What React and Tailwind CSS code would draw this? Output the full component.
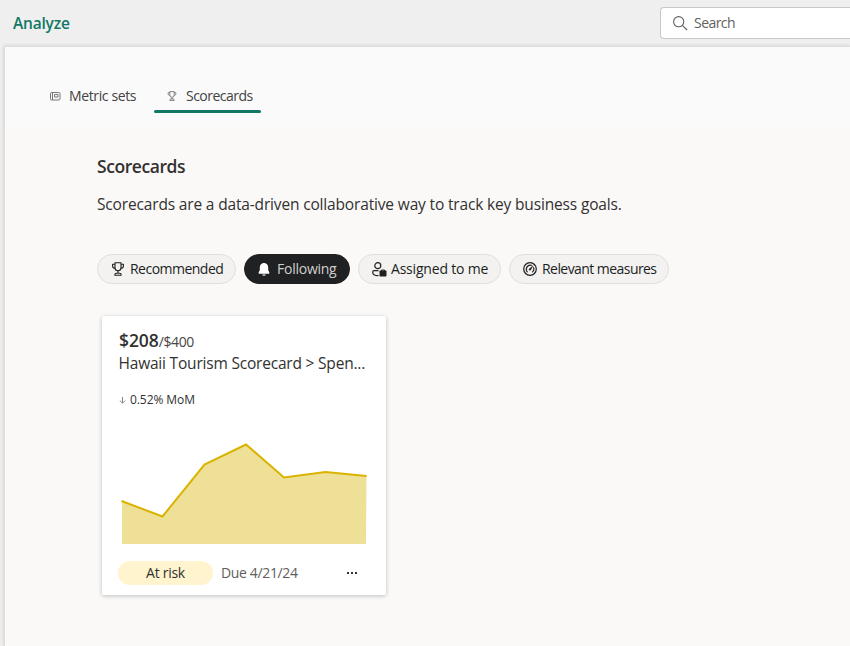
import React from 'react';

function Trophy({ className }) {
  return (
    <svg className={className} viewBox="0 0 14 14" fill="none" stroke="currentColor" strokeWidth="1.1" strokeLinejoin="round">
      <path d="M4 .8h6v5a3 3 0 0 1-6 0z" />
      <path d="M4 2.300H1.600v1.600c0 1.300.9 2.300 2.500 2.400M10 2.300h2.400v1.600c0 1.300-.9 2.300-2.500 2.400M7 8.900v2.300M3.900 13.200v-.6c0-.8.5-1.400 1.300-1.400h3.600c.8 0 1.300.6 1.300 1.400v.6z" />
    </svg>
  );
}

function MetricSet() {
  return (
    <svg className="w-[11px] h-[9px] text-[#777]" viewBox="0 0 11 9" fill="none" stroke="currentColor">
      <rect x="0.5" y="0.5" width="9.500" height="7.500" rx="1.200" />
      <path d="M2.500 1v7M4.500 2.500h3.500v2.500h-3.500z" />
    </svg>
  );
}

function Bell() {
  return (
    <svg className="w-3 h-[13px]" viewBox="0 0 12 13" fill="currentColor">
      <path d="M6 0a4.200 4.200 0 0 0-4.200 4.200v2.900L.6 9.700c-.2.500.1 1 .6 1h9.600c.5 0 .8-.5.6-1l-1.200-2.600V4.200A4.200 4.200 0 0 0 6 0zM4.200 11.400h3.600a1.900 1.900 0 0 1-3.600 0z" />
    </svg>
  );
}

function Assigned() {
  return (
    <svg className="w-[15px] h-[15px]" viewBox="0 0 15 15" fill="none" stroke="currentColor" strokeWidth="1.200">
      <circle cx="5.800" cy="3.700" r="3" />
      <path d="M6.500 8.600H2A1.300 1.300 0 0 0 .7 9.900c0 2.300 2 3.800 5.800 3.800" />
      <rect x="7.500" y="8.500" width="7" height="6" rx="0.800" fill="currentColor" stroke="none" />
      <path d="M9.500 9V8h3v1" strokeWidth="1" />
    </svg>
  );
}

function Gauge() {
  return (
    <svg className="w-[14px] h-[14px]" viewBox="0 0 14 14" fill="none" stroke="currentColor" strokeWidth="1.200" strokeLinecap="round">
      <circle cx="7" cy="7" r="6.300" />
      <path d="M4.300 9.800a4 4 0 0 1 4-6.500M10.700 5.600A4 4 0 0 1 9.700 9.800" />
      <path d="M9.900 3.900 7.600 7.900a.8.8 0 1 1-1.400-.8z" fill="currentColor" strokeWidth=".5" />
    </svg>
  );
}

function Pill({ className, icon, children }) {
  return (
    <button className={`flex h-[30px] shrink-0 items-center rounded-full border pl-[13px] text-[14px] whitespace-nowrap ${className}`}>
      {icon}
      <span className="pb-[2px]">{children}</span>
    </button>
  );
}

const LINE = '0,58 41,73.500 83,21.500 124.500,1.500 162.500,34.500 204,29 245,33';

export default function App() {
  return (
    <div className="flex h-[646px] w-[850px] flex-col overflow-hidden bg-[#efefef] font-['Open_Sans','Noto_Sans',sans-serif] text-[#323130]">
      <header className="flex h-[46px] shrink-0 items-center justify-between pl-[13px]">
        <h1 className="text-[15.500px] leading-5 font-semibold tracking-[-0.200px] text-[#117865]">Analyze</h1>
        <div className="flex h-8 w-[190px] items-center rounded-l border border-r-0 border-[#c8c8c8] bg-white pl-3 text-[#616161]">
          <svg className="h-[15px] w-[15px]" viewBox="0 0 15 15" fill="none" stroke="currentColor" strokeWidth="1.100">
            <circle cx="5.700" cy="5.700" r="5.100" />
            <path d="m9.400 9.400 4.600 4.600" />
          </svg>
          <span className="ml-[6px] pb-[2px] text-[14px] tracking-[-0.550px]">Search</span>
        </div>
      </header>

      <main className="ml-1 flex min-h-0 flex-1 flex-col border-t border-l border-[#dedede] bg-[#faf9f8] shadow-[0_0_4px_rgba(0,0,0,0.16)]">
        <nav className="flex h-[81px] shrink-0 items-start bg-[#fafafa] pt-[34px] pl-[45px] text-[14px] leading-8 text-[#424242]">
          <div className="flex h-[30px] items-center">
            <MetricSet />
            <span className="ml-2 w-[67px] tracking-[-0.380px] whitespace-nowrap">Metric sets</span>
          </div>
          <div className="ml-[18px] flex h-8 w-[107px] flex-col">
            <div className="flex h-[29px] items-center pl-[13px]">
              <Trophy className="h-[10px] w-[10px] text-[#666]" />
              <span className="ml-[9px] pt-px tracking-[-0.520px]">Scorecards</span>
            </div>
            <div className="h-[3px] rounded-full bg-[#117865]" />
          </div>
        </nav>

        <section className="pt-[27px] pl-[92px]">
          <h2 className="text-[17.500px] leading-[22px] font-semibold tracking-[-0.440px]">Scorecards</h2>
          <p className="mt-4 text-[15.500px] leading-[22px] tracking-[-0.160px]">Scorecards are a data-driven collaborative way to track key business goals.</p>

          <div className="mt-[39px] flex gap-2 text-[#201f1e]">
            <Pill className="w-[139px] border-[#e1dfdd] bg-[#f3f2f1] tracking-[-0.520px]" icon={<Trophy className="mr-[5px] h-[14px] w-[14px]" />}>Recommended</Pill>
            <Pill className="w-[106px] border-[#201f1e] bg-[#1f2122] tracking-[-0.250px] text-[#d2d0ce]" icon={<span className="mr-[7px] text-white"><Bell /></span>}>Following</Pill>
            <Pill className="w-[143px] border-[#e1dfdd] bg-[#f3f2f1] tracking-[-0.200px]" icon={<span className="mr-1"><Assigned /></span>}>Assigned to me</Pill>
            <Pill className="w-[160px] border-[#e1dfdd] bg-[#f3f2f1] tracking-[-0.560px]" icon={<span className="mr-[5px]"><Gauge /></span>}>Relevant measures</Pill>
          </div>

          <article className="mt-8 ml-[5px] flex h-[279px] w-[284px] flex-col rounded-[2px] bg-white pt-[13px] pl-4 shadow-[0_1px_4px_rgba(0,0,0,0.24)]">
            <div className="flex h-[23px] items-baseline pl-px leading-[22px]">
              <span className="text-[17.500px] font-semibold tracking-[-0.100px]">$208</span>
              <span className="text-[14px] tracking-[-0.350px] text-[#484644]">/$400</span>
            </div>
            <div className="pl-[0.500px] text-[15.500px] leading-[22px] tracking-[-0.200px] whitespace-nowrap">Hawaii Tourism Scorecard &gt; Spen...</div>
            <div className="mt-[18px] flex h-4 items-center pl-px text-[12px]">
              <svg className="mr-1 h-[7px] w-[7px] text-[#8a8886]" viewBox="0 0 7 7" fill="none" stroke="currentColor">
                <path d="M3.500 0v6M.8 3.500l2.700 2.700 2.700-2.700" />
              </svg>
              <span className="tracking-[-0.080px]">0.52% MoM</span>
            </div>
            <svg className="mt-[35px] ml-[3px] h-[101px] w-[246px] shrink-0" viewBox="-0.500 0 246 101">
              <polygon points={`0.500,101 0.500,58 ${LINE} 244.500,101`} fill="#efe098" />
              <polyline points={LINE} fill="none" stroke="#d9b300" strokeWidth="2" />
            </svg>
            <footer className="mt-[16px] flex h-[25px] items-center text-[14px]">
              <span className="flex h-6 w-[95px] items-center justify-center rounded-full bg-[#fff4ce] tracking-[-0.280px]">At risk</span>
              <span className="ml-2 w-[78px] tracking-[-0.350px] whitespace-nowrap text-[#605e5c]">Due 4/21/24</span>
              <span className="ml-[48px] flex gap-[2px]">
                <i className="h-[2px] w-[2px] bg-[#323130]" />
                <i className="h-[2px] w-[2px] bg-[#323130]" />
                <i className="h-[2px] w-[2px] bg-[#323130]" />
              </span>
            </footer>
          </article>
        </section>
      </main>
    </div>
  );
}
